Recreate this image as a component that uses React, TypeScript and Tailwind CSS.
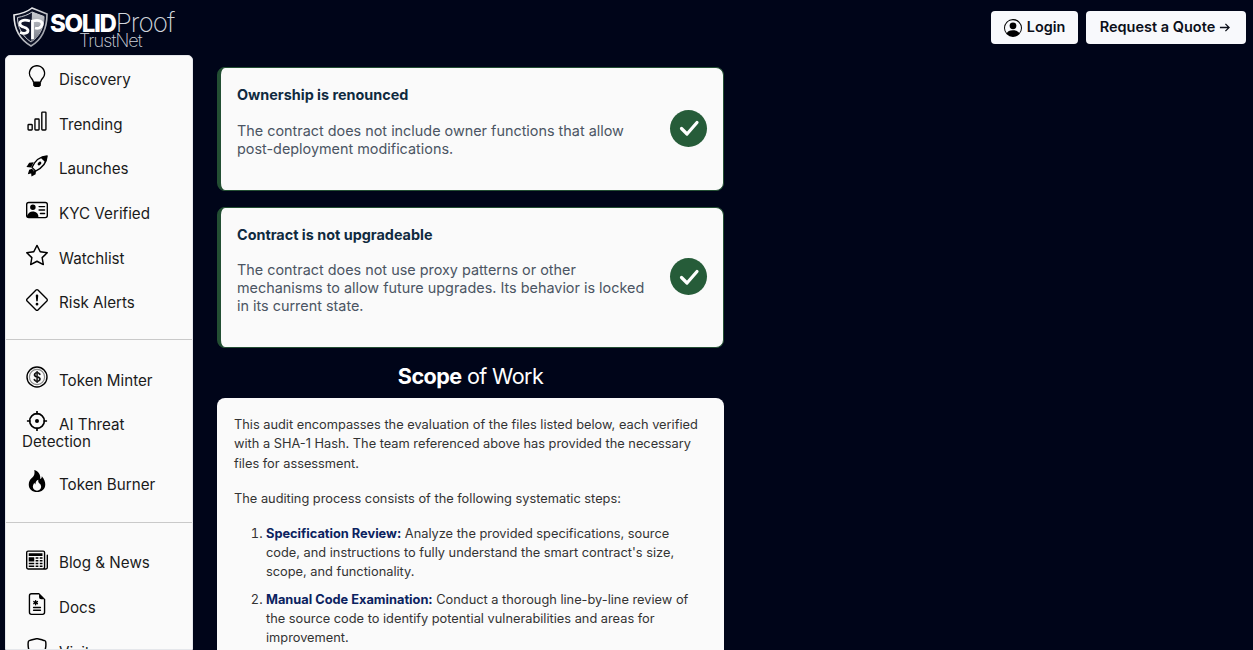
import React from 'react';
import {
  BsLightbulb, BsBarChart, BsPersonVcard, BsStar, BsExclamationDiamond, BsCurrencyDollar,
  BsFire, BsNewspaper, BsFileEarmarkMedical, BsShield, BsPersonCircle,
} from 'react-icons/bs';

type IconProps = React.SVGProps<SVGSVGElement>;

const TargetIcon = (props: IconProps) => (
  <svg viewBox="0 0 24 24" fill="none" stroke="currentColor" strokeWidth="1.8" {...props}>
    <circle cx="12" cy="12" r="8" />
    <circle cx="12" cy="12" r="2.2" fill="currentColor" stroke="none" />
    <path d="M12 1v4M12 19v4M1 12h4M19 12h4" />
  </svg>
);

const RocketIcon = (props: IconProps) => (
  <svg viewBox="0 0 24 24" {...props}>
    {/* fins */}
    <path d="M8.5 8 L3.5 8.5 L0.5 13 L5.5 13.5 Z" fill="currentColor" />
    <path d="M11 16 L10.5 21 L6 23.5 L5.5 19 Z" fill="currentColor" />
    <path d="M6.5 15 L3.5 16 L2 21 L7.5 19.5 L8.5 17 Z" fill="currentColor" />
    {/* body */}
    <path d="M23 1 C16 1.5 10.5 5 6.5 13.5 L10.5 17.5 C19 13.5 22.5 8 23 1 Z" fill="#fafafa" stroke="currentColor" strokeWidth="1.5" strokeLinejoin="round" />
    <path d="M23 1 C20 1 18 1.7 16 3 L21 8 C22.3 6 23 4 23 1 Z" fill="currentColor" />
    <ellipse cx="14.7" cy="9.3" rx="1.6" ry="2.4" transform="rotate(45 14.7 9.3)" fill="currentColor" />
  </svg>
);

const CoinIcon = (props: IconProps) => (
  <svg viewBox="0 0 22 22" fill="none" {...props}>
    <circle cx="11" cy="11" r="10" stroke="currentColor" strokeWidth="1.4" />
    <circle cx="11" cy="11" r="7.6" stroke="#8a8a8a" strokeWidth="1.2" />
    <BsCurrencyDollar x="4.5" y="4.5" size="13" strokeWidth="0.6" stroke="currentColor" />
  </svg>
);

const groups = [
  [
    { name: 'Discovery', icon: BsLightbulb },
    { name: 'Trending', icon: BsBarChart },
    { name: 'Launches', icon: RocketIcon },
    { name: 'KYC Verified', icon: BsPersonVcard },
    { name: 'Watchlist', icon: BsStar },
    { name: 'Risk Alerts', icon: BsExclamationDiamond },
  ],
  [
    { name: 'Token Minter', icon: CoinIcon },
    { name: 'AI Threat Detection', icon: TargetIcon, wrapped: true },
    { name: 'Token Burner', icon: BsFire },
  ],
  [
    { name: 'Blog & News', icon: BsNewspaper },
    { name: 'Docs', icon: BsFileEarmarkMedical },
    { name: 'Visit', icon: BsShield },
  ],
];

function Logo() {
  return (
    <div className="flex items-start ml-[12px] mt-[7px] h-[41px]">
      <svg viewBox="0 0 36 40" className="w-[36px] h-[40px] shrink-0">
        <defs>
          <linearGradient id="shield" x1="0" y1="0" x2="1" y2="1">
            <stop offset="0" stopColor="#ffffff" />
            <stop offset="1" stopColor="#8b8f99" />
          </linearGradient>
          <linearGradient id="inner" x1="0" y1="0" x2="0" y2="1">
            <stop offset="0" stopColor="#c9ccd2" />
            <stop offset="1" stopColor="#777b85" />
          </linearGradient>
        </defs>
        <path d="M20 1 L35 7 C35 21 31 32 19 39 C7 32 2 21 2 8 C9 7 15 5 20 1 Z" fill="#0b1024" stroke="url(#shield)" strokeWidth="1.6" />
        <path d="M20 5 L32 9.5 C32 20 28 29 19 35 C10 29 5.5 20 5.5 10.5 C11 9.5 16 8 20 5 Z" fill="#11162b" stroke="#c9ccd2" strokeWidth="1" />
        <path d="M20 5 L32 9.5 C32 20 28 29 19 35 Z" fill="url(#inner)" />
        <path d="M18 14 C11 12 7 14 8 17.5 C9 21 16 19.5 16 23.5 C16 26.5 12 27 8 25.5" fill="none" stroke="#fff" strokeWidth="2.8" />
        <path d="M20.5 32 L20.5 14 C27 12.5 31 14 30 18 C29 21 26 22 23 21" fill="none" stroke="#fff" strokeWidth="2.8" />
      </svg>
      <div className="ml-[2px] mt-[3px] text-white leading-none">
        <div className="flex items-baseline h-[23px]">
          <span className="text-[24px] font-extrabold tracking-[-1.3px]">SOLID</span>
          <span className="text-[26px] font-extralight tracking-[-0.9px] text-gray-300">Proof</span>
        </div>
        <div className="text-[18px] font-extralight tracking-[-0.9px] text-gray-300 ml-[29px] -mt-[1px]">TrustNet</div>
      </div>
    </div>
  );
}

function Sidebar() {
  return (
    <aside className="w-[188px] ml-[5px] shrink-0 bg-[#fafafa] rounded-t-[5px] h-[595px] overflow-hidden border border-[#e5e7eb]">
      {groups.map((group, i) => (
        <div
          key={i}
          className={
            i === 0 ? 'pt-[1.6px]' : i === 1 ? 'border-t border-[#c9c9c9] mt-[13.4px] pt-[18px]' : 'border-t border-[#c9c9c9] mt-[15px] pt-[18px]'
          }
        >
          {group.map((item) => (
            <a
              key={item.name}
              className={`block pl-[16px] pr-2 text-[15.2px] text-[#1a1a1a] ${
                'wrapped' in item ? 'pt-[13.2px] pb-[12.4px] leading-[17px]' : 'py-[13.4px] leading-[17.9px]'
              }`}
            >
              <item.icon className="inline-block w-[22px] h-[22px] ml-[4px] mr-[11px] -mt-[9px] align-middle text-black" />
              {item.name}
            </a>
          ))}
        </div>
      ))}
    </aside>
  );
}

function CheckCard({ title, text, height, gap }: { title: string; text: string; height: string; gap: string }) {
  return (
    <div className={`${height} flex items-start bg-[#fafafa] rounded-[8px] border border-[#234f33] border-l-4 pl-[16px] pr-[16px] pt-[18px]`}>
      <div className="flex-1 min-w-0">
        <h3 className="text-[14.4px] leading-[18px] font-bold text-[#0f2a3f]">{title}</h3>
        <p className={`${gap} text-[14.4px] leading-[18px] text-[#4b5563]`}>{text}</p>
      </div>
      <div className="w-[37px] h-[37px] ml-[22px] shrink-0 rounded-full bg-[#265c39] flex items-center justify-center text-white self-center -mt-[20px]">
        <svg viewBox="0 0 24 24" className="w-[24px] h-[24px]" fill="none" stroke="currentColor" strokeWidth="3.2" strokeLinecap="round" strokeLinejoin="round">
          <path d="M4.5 12.5 L10 18 L20 6.5" />
        </svg>
      </div>
    </div>
  );
}

export default function App() {
  return (
    <div className="h-[650px] overflow-hidden bg-[#000519] font-['Inter',sans-serif]">
      <header className="h-[55px] flex justify-between">
        <Logo />
        <div className="flex gap-[8px] pt-[11px] pr-[7px]">
          <button className="h-[33px] w-[87px] pb-[2px] rounded-[4px] bg-[#f8f9fc] flex items-center justify-center gap-[5px] text-[14.4px] font-semibold text-[#0b0f19]">
            <BsPersonCircle className="w-[18px] h-[18px] text-black mt-[2px]" />
            Login
          </button>
          <button className="h-[33px] w-[160px] pb-[2px] pr-[2px] rounded-[4px] bg-[#f8f9fc] flex items-center justify-center gap-[4px] text-[14.5px] font-semibold text-[#0b0f19]">
            Request a Quote
            <svg viewBox="0 0 12 12" className="w-[11px] h-[11px] mt-[1px]" fill="none" stroke="currentColor" strokeWidth="1.4">
              <path d="M1 6h10M7 2l4 4-4 4" />
            </svg>
          </button>
        </div>
      </header>
      <div className="flex">
        <Sidebar />
        <main className="w-[507px] ml-[24px] pt-[12px]">
          <CheckCard
            title="Ownership is renounced"
            text="The contract does not include owner functions that allow post-deployment modifications."
            height="h-[124px]"
            gap="mt-[18px]"
          />
          <div className="h-[16px]" />
          <CheckCard
            title="Contract is not upgradeable"
            text="The contract does not use proxy patterns or other mechanisms to allow future upgrades. Its behavior is locked in its current state."
            height="h-[141px]"
            gap="mt-[17px]"
          />
          <h2 className="mt-[15px] h-[26px] text-center text-[21.6px] leading-[26px] text-white tracking-[-0.6px]">
            <span className="font-bold">Scope</span> of Work
          </h2>
          <section className="mt-[9px] bg-[#fafafa] rounded-[8px] pl-[17px] pr-[24px] pt-[17.1px] pb-4 text-[12.8px] leading-[19.2px] text-[#333333]">
            <p>
              This audit encompasses the evaluation of the files listed below, each verified with a SHA-1 Hash. The team referenced above has provided the necessary files for assessment.
            </p>
            <p className="mt-[16px]">The auditing process consists of the following systematic steps:</p>
            <ol className="mt-[16px] list-decimal pl-[32px]">
              <li>
                <strong className="font-bold text-[#0b2260]">Specification Review:</strong> Analyze the provided specifications, source code, and instructions to fully understand the smart contract's size, scope, and functionality.
              </li>
              <li className="mt-[8.4px]">
                <strong className="font-bold text-[#0b2260]">Manual Code Examination:</strong> Conduct a thorough line-by-line review of the source code to identify potential vulnerabilities and areas for improvement.
              </li>
            </ol>
          </section>
        </main>
      </div>
    </div>
  );
}
